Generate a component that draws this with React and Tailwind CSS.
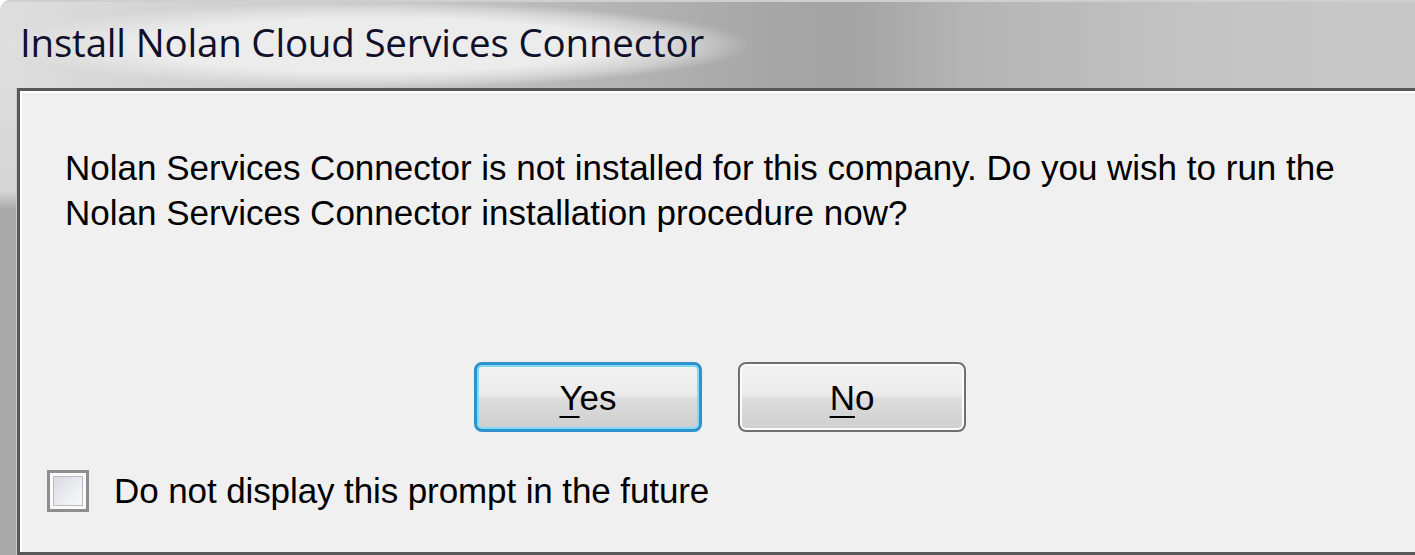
import { useState } from "react";

export default function App() {
  const [dontShow, setDontShow] = useState(false);

  return (
    <div className="w-[1415px] h-[555px] flex flex-col overflow-hidden bg-[linear-gradient(to_right,#dedede_0%,#c4c4c4_30%,#a6a6a6_55%,#a3a3a3_60%,#b4b4b4_68%,#c4c4c4_85%,#c8c8c8_100%)] rounded-tl-[10px]">
      {/* Title bar */}
      <div className="h-[88px] flex-shrink-0 flex items-start border-t-2 border-[#cfcfcf]">
        <div className="w-[750px] h-[86px] pl-[20px] pt-[14px] bg-[radial-gradient(closest-side,#ececec_62%,rgba(228,228,228,0.6)_85%,rgba(220,220,220,0)_100%)]">
          <span className="font-['Segoe_UI','Open_Sans',sans-serif] text-[38.5px] leading-[52px] text-[#10102a] tracking-[-0.2px]">
            Install Nolan Cloud Services Connector
          </span>
        </div>
      </div>

      {/* Body */}
      <div className="flex flex-1">
        <div className="w-[17px] flex-shrink-0 bg-[linear-gradient(to_bottom,#dcdcdc_0%,#d6d6d6_22%,#a9a9a9_26%,#a9a9a9_100%)] border-r border-[#c8c8c8]"></div>
        <div className="flex-1 bg-[#f0f0f0] border-t-[3px] border-l-[3px] border-b-[3px] border-[#585858] shadow-[inset_2px_2px_0_#ffffff] flex flex-col font-['Liberation_Sans',Arial,sans-serif] text-black">
          <p className="pl-[45px] pt-[54px] text-[35px] leading-[45px]">
            Nolan Services Connector is not installed for this company. Do you wish to run the
            <br />
            Nolan Services Connector installation procedure now?
          </p>

          <div className="flex gap-[36px] pl-[454px] mt-[127px]">
            <button className="w-[228px] h-[70px] rounded-[8px] border-[3px] border-[#2f92cc] shadow-[inset_0_0_0_2px_#7fdcf8] bg-[linear-gradient(to_bottom,#f3f3f3_0%,#ebebeb_48%,#dddddd_52%,#cfcfcf_100%)] text-[35px] leading-none">
              <span className="underline underline-offset-[6px] decoration-2">Y</span>es
            </button>
            <button className="w-[228px] h-[70px] rounded-[8px] border-2 border-[#707070] shadow-[inset_0_0_0_2px_#fcfcfc] bg-[linear-gradient(to_bottom,#f3f3f3_0%,#ebebeb_48%,#dddddd_52%,#cfcfcf_100%)] text-[35px] leading-none">
              <span className="underline underline-offset-[6px] decoration-2">N</span>o
            </button>
          </div>

          <label className="flex items-center gap-[25px] pl-[27px] mt-[36px] cursor-pointer">
            <span
              onClick={() => setDontShow(!dontShow)}
              className="w-[42px] h-[42px] flex-shrink-0 border-[3px] border-[#8e8e8e] p-[3px] bg-[#fafafa]"
            >
              <span className="block w-full h-full border border-[#b8bcc4] bg-[linear-gradient(135deg,#d8dbe2_0%,#eceef2_60%,#f8f8f8_100%)] text-center text-[26px] leading-[26px]">
                {dontShow ? "✓" : ""}
              </span>
            </span>
            <span className="text-[35px] leading-[45px] tracking-[-0.1px]">Do not display this prompt in the future</span>
          </label>
        </div>
      </div>
    </div>
  );
}
